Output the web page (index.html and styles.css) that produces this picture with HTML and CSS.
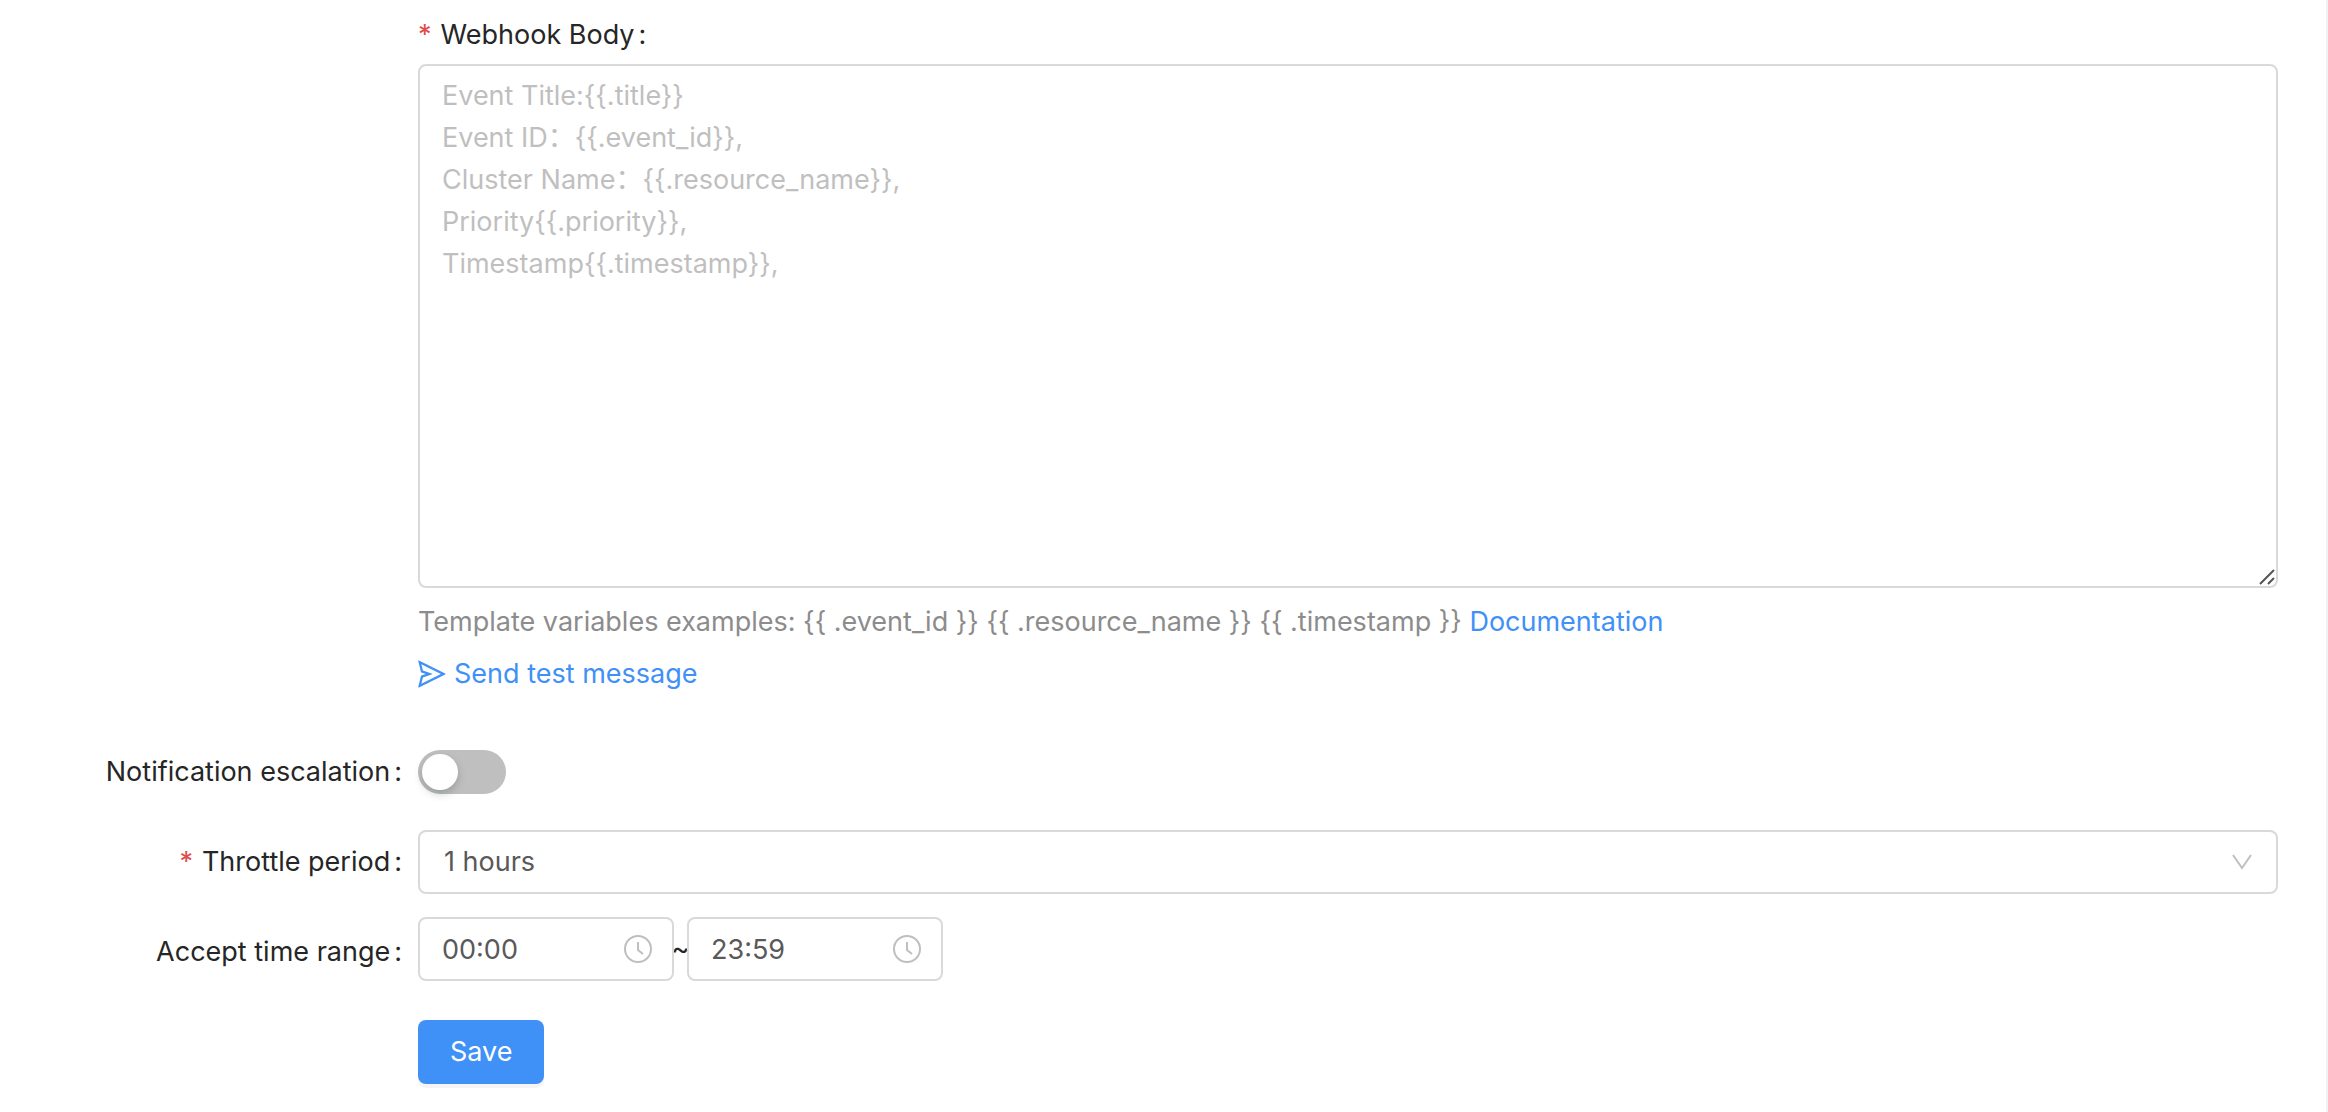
FILE: index.html
```
<!DOCTYPE html>
<html lang="en">
<head>
    <meta charset="UTF-8">
    <meta name="viewport" content="width=device-width, initial-scale=1.0">
    <title>Webhook Notification</title>
    <link rel="stylesheet" href="styles.css">
</head>
<body>
    <form class="form">
        <div class="form-item body-item">
            <div class="control">
                <label class="label label-top" for="webhookBody"><span class="required">*</span>Webhook Body<span class="colon">:</span></label>
                <div class="textarea-wrap">
                    <textarea id="webhookBody" class="field textarea" placeholder="Event Title:{{.title}}
Event ID：{{.event_id}},
Cluster Name：{{.resource_name}},
Priority{{.priority}},
Timestamp{{.timestamp}},"></textarea>
                    <svg class="resizer" viewBox="0 0 16 16" aria-hidden="true"><path d="M1 15 15 1M9 15l6-6"/></svg>
                </div>
                <p class="help">Template variables examples: {{ .event_id }} {{ .resource_name }} {{ .timestamp }} <a href="#docs">Documentation</a></p>
                <button type="button" class="send">
                    <svg class="send-icon" viewBox="64 64 896 896" aria-hidden="true"><path d="M931.4 498.9L94.9 79.5c-3.4-1.7-7.3-2.1-11-1.2a15.99 15.99 0 00-11.7 19.3l86.2 352.2c1.3 5.3 5.2 9.6 10.4 11.3l147.7 50.7-147.6 50.7c-5.2 1.8-9.1 6-10.3 11.3L72.2 926.5c-.9 3.7-.5 7.6 1.2 10.9 3.9 7.9 13.5 11.1 21.5 7.2l836.5-417c3.1-1.5 5.6-4.1 7.2-7.1 3.9-8 .7-17.6-7.200-21.600zM170.800 826.300l50.300-205.600 295.200-101.300c2.300-.8 4.200-2.600 5-5 1.400-4.200-.8-8.700-5-10.200L221.100 403 171 198.200l628 314.900-628.200 313.200z"/></svg>
                    Send test message
                </button>
            </div>
        </div>

        <div class="form-item">
            <label class="label" for="escalation">Notification escalation<span class="colon">:</span></label>
            <div class="control">
                <input type="checkbox" role="switch" id="escalation" class="switch">
            </div>
        </div>

        <div class="form-item">
            <label class="label" for="throttle"><span class="required">*</span>Throttle period<span class="colon">:</span></label>
            <div class="control select-wrap">
                <select id="throttle" class="field select">
                    <option>1 hours</option>
                </select>
                <svg class="arrow" viewBox="0 0 22 16" aria-hidden="true"><path d="M2 1 11 14 20 1"/></svg>
            </div>
        </div>

        <div class="form-item">
            <label class="label" for="timeFrom">Accept time range<span class="colon">:</span></label>
            <div class="control time-range">
                <div class="time-wrap">
                    <input type="text" id="timeFrom" class="field time" value="00:00">
                    <svg class="clock" viewBox="0 0 28 28" aria-hidden="true"><circle cx="14" cy="14" r="13"/><path d="M14 7v8l5 4"/></svg>
                </div>
                <span class="tilde">~</span>
                <div class="time-wrap">
                    <input type="text" id="timeTo" class="field time" value="23:59" aria-label="Accept time range end">
                    <svg class="clock" viewBox="0 0 28 28" aria-hidden="true"><circle cx="14" cy="14" r="13"/><path d="M14 7v8l5 4"/></svg>
                </div>
            </div>
        </div>

        <div class="form-item save-item">
            <div class="control">
                <button type="submit" class="save">Save</button>
            </div>
        </div>
    </form>
</body>
</html>
```
FILE: styles.css
```
* {
    box-sizing: border-box;
}

body {
    margin: 0;
    min-height: 100vh;
    background-color: #fff;
    border-right: 2px solid #f0f0f5; /* edge of the page behind the card */
    font-family: Inter, "Noto Sans CJK SC", sans-serif;
    font-size: 27px;
    line-height: 42px;
    color: #262626;
}

input, select, textarea, button {
    font: inherit;
}

.form {
    padding: 14px 48px 0 0;
}

.form-item {
    display: grid;
    grid-template-columns: 418px 1fr;
    align-items: center;
    min-height: 90px;
}

.control {
    grid-column: 2;
}

.label {
    padding-right: 16px;
    text-align: right;
    white-space: nowrap;
}

.label-top {
    display: block;
    padding: 0;
    text-align: left;
}

.required {
    margin-right: 9px;
    color: #e04a4a;
}

.colon {
    margin-left: 4px;
}

.field {
    display: block;
    width: 100%;
    margin: 0;
    border: 2px solid #d9d9d9;
    border-radius: 8px;
    outline: none;
    background-color: #fff;
    color: #595959;
}

.field:focus {
    border-color: #3f90f7;
}

/* webhook body */
.body-item {
    margin-bottom: 32px;
}

.textarea-wrap, .select-wrap, .time-wrap {
    position: relative;
}

.textarea {
    height: 524px;
    margin-top: 8px;
    padding: 9px 22px;
    resize: none;
}

.textarea::placeholder {
    color: #bfbfbf;
}

.resizer {
    position: absolute;
    right: 3px;
    bottom: 3px;
    width: 16px;
    height: 16px;
    fill: none;
    stroke: #555;
    stroke-width: 2;
}

.help {
    margin: 13px 0 10px;
    color: #8c8c8c;
}

.help a, .send {
    color: #3f90f7;
    text-decoration: none;
}

.send {
    display: flex;
    align-items: center;
    gap: 8px;
    padding: 0;
    border: 0;
    background: none;
    cursor: pointer;
}

.send-icon {
    width: 28px;
    height: 28px;
    fill: currentColor;
}

/* switch */
.switch {
    display: block;
    appearance: none;
    width: 88px;
    height: 44px;
    margin: 0;
    padding: 4px;
    border-radius: 22px;
    background-color: #bfbfbf;
    cursor: pointer;
}

.switch::before {
    content: "";
    display: block;
    width: 36px;
    height: 36px;
    border-radius: 50%;
    background-color: #fff;
    box-shadow: 0 4px 8px rgba(0, 35, 11, 0.2);
}

.switch:checked {
    background-color: #3f90f7;
}

.switch:checked::before {
    margin-left: auto;
}

/* throttle period */
.select {
    appearance: none;
    height: 64px;
    padding: 0 24px;
}

.arrow {
    position: absolute;
    top: 24px;
    right: 25px;
    width: 22px;
    height: 16px;
    fill: none;
    stroke: #bfbfbf;
    stroke-width: 2;
    pointer-events: none;
}

/* time range */
.time-range {
    display: flex;
    align-items: center;
    padding-bottom: 6px;
}

.time-wrap {
    width: 256px;
}

.time {
    height: 64px;
    padding: 0 60px 0 22px;
}

.clock {
    position: absolute;
    top: 18px;
    right: 22px;
    width: 28px;
    height: 28px;
    fill: none;
    stroke: #bfbfbf;
    stroke-width: 2;
    pointer-events: none;
}

.tilde {
    width: 13px;
    display: flex;
    justify-content: center;
}

.save-item {
    margin-top: 10px;
}

.save {
    display: block;
    height: 64px;
    padding: 0 32px;
    border: 0;
    border-radius: 8px;
    background-color: #3f90f7;
    box-shadow: 0 4px 0 rgba(0, 0, 0, 0.04);
    color: #fff;
    cursor: pointer;
}
```
